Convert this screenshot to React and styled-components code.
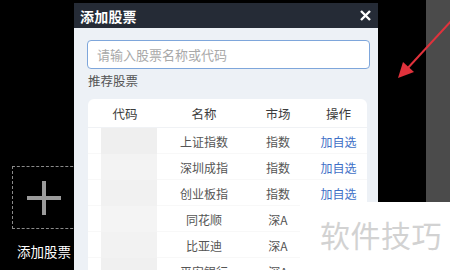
import styled, { createGlobalStyle } from "styled-components";

const Global = createGlobalStyle`
    html, body {
        margin: 0;
        padding: 0;
        background: #000;
        overflow: hidden;
    }
    * { box-sizing: border-box; }
`;

const font = `"Noto Sans CJK SC", "Noto Sans", sans-serif`;

const Stage = styled.div`
    position: relative;
    width: 450px;
    height: 270px;
    display: flex;
    background: #000;
    font-family: ${font};
    overflow: hidden;
`;

const LeftPane = styled.div`
    width: 74px;
    flex: none;
    padding: 166px 0 0 12px;
    display: flex;
    flex-direction: column;
    align-items: flex-start;
`;

const AddTile = styled.div`
    width: 66px;
    height: 63px;
    border: 1px dashed #8a8a8a;
    display: flex;
    align-items: center;
    justify-content: center;
    padding-right: 2px;
`;

const AddLabel = styled.div`
    margin: 13px 0 0 5px;
    color: #fff;
    font-size: 13.5px;
    line-height: 18px;
    white-space: nowrap;
`;

const Modal = styled.div`
    position: relative;
    z-index: 2;
    width: 304px;
    flex: none;
    margin-top: 3px;
    display: flex;
    flex-direction: column;
    background: #edf1f6;
`;

const Header = styled.div`
    height: 25px;
    flex: none;
    background: #252b36;
    display: flex;
    align-items: center;
    justify-content: space-between;
    padding: 0 7px 0 6px;
    color: #fff;
`;

const Title = styled.span`
    font-size: 14px;
    font-weight: 700;
    letter-spacing: 0.2px;
`;

const Body = styled.div`
    padding: 12px 8px 0 13px;
    display: flex;
    flex-direction: column;
`;

const Search = styled.div`
    height: 29px;
    flex: none;
    background: #fff;
    border: 1.5px solid #7ea6db;
    border-radius: 4px;
    display: flex;
    align-items: center;
    padding-left: 9px;
    color: #a9a9a9;
    font-size: 13px;
`;

const Section = styled.div`
    margin: 3px 0 9px 1px;
    font-size: 12.5px;
    line-height: 18px;
    color: #555;
`;

const Card = styled.div`
    margin-left: 1px;
    width: 279px;
    background: #fff;
    border-radius: 6px;
    display: flex;
    flex-direction: column;
`;

const Row = styled.div`
    display: grid;
    grid-template-columns: 74px 84px 64px 57px;
    height: ${(p) => (p.head ? "29px" : "26px")};
    flex: none;
    align-items: center;
    border-bottom: 1px solid ${(p) => (p.head ? "#f0f2f5" : "#f8f8f8")};
    color: ${(p) => (p.head ? "#3c3c3c" : "#555")};
    font-size: ${(p) => (p.head ? "12.5px" : "12px")};
`;

const Cell = styled.div`
    text-align: center;
    white-space: nowrap;
    color: ${(p) => (p.link ? "#3e6fc6" : "inherit")};
`;

const Mosaic = styled.div`
    height: 26px;
    margin: 0 5px 0 13px;
    background: ${(p) => p.tone};
`;

const RightBlack = styled.div`
    width: 48px;
    flex: none;
    background: #000;
`;

const RightGray = styled.div`
    flex: 1;
    background: #4b4b4b;
`;

const Arrow = styled.svg`
    position: absolute;
    z-index: 3;
    left: 390px;
    top: 0;
`;

const Watermark = styled.div`
    position: absolute;
    z-index: 4;
    left: 300px;
    top: 202px;
    width: 150px;
    height: 68px;
    background: #fff;
    display: flex;
    align-items: center;
    padding: 0 0 4px 20px;
    color: #d2d2d2;
    font-size: 30px;
    letter-spacing: 0.5px;
    white-space: nowrap;
`;

const rows = [
    ["上证指数", "指数", "加自选", "#efefef"],
    ["深圳成指", "指数", "加自选", "#f3f3f3"],
    ["创业板指", "指数", "加自选", "#f1f1f1"],
    ["同花顺", "深A", "", "#f4f4f4"],
    ["比亚迪", "深A", "", "#f2f2f2"],
    ["平安银行", "深A", "", "#f0f0f0"],
];

export default function App() {
    return (
        <Stage>
            <Global />
            <LeftPane>
                <AddTile>
                    <svg width="34" height="34" viewBox="0 0 34 34">
                        <rect x="15" y="0" width="4" height="34" fill="#9b9b9b" />
                        <rect x="0" y="15" width="34" height="4" fill="#9b9b9b" />
                    </svg>
                </AddTile>
                <AddLabel>添加股票</AddLabel>
            </LeftPane>
            <Modal>
                <Header>
                    <Title>添加股票</Title>
                    <svg width="11" height="11" viewBox="0 0 11 11">
                        <path d="M1 1 L10 10 M10 1 L1 10" stroke="#fff" strokeWidth="2.4" />
                    </svg>
                </Header>
                <Body>
                    <Search>请输入股票名称或代码</Search>
                    <Section>推荐股票</Section>
                    <Card>
                        <Row head>
                            <Cell>代码</Cell>
                            <Cell>名称</Cell>
                            <Cell>市场</Cell>
                            <Cell>操作</Cell>
                        </Row>
                        {rows.map(([name, market, op, tone]) => (
                            <Row key={name}>
                                <Mosaic tone={tone} />
                                <Cell>{name}</Cell>
                                <Cell>{market}</Cell>
                                <Cell link>{op}</Cell>
                            </Row>
                        ))}
                    </Card>
                </Body>
            </Modal>
            <RightBlack />
            <RightGray />
            <Arrow width="60" height="90" viewBox="0 0 60 90">
                <line x1="62" y1="20" x2="16" y2="70" stroke="#e0323c" strokeWidth="2" />
                <polygon points="8,78 13,62 24,72" fill="#e0323c" />
            </Arrow>
            <Watermark>软件技巧</Watermark>
        </Stage>
    );
}
